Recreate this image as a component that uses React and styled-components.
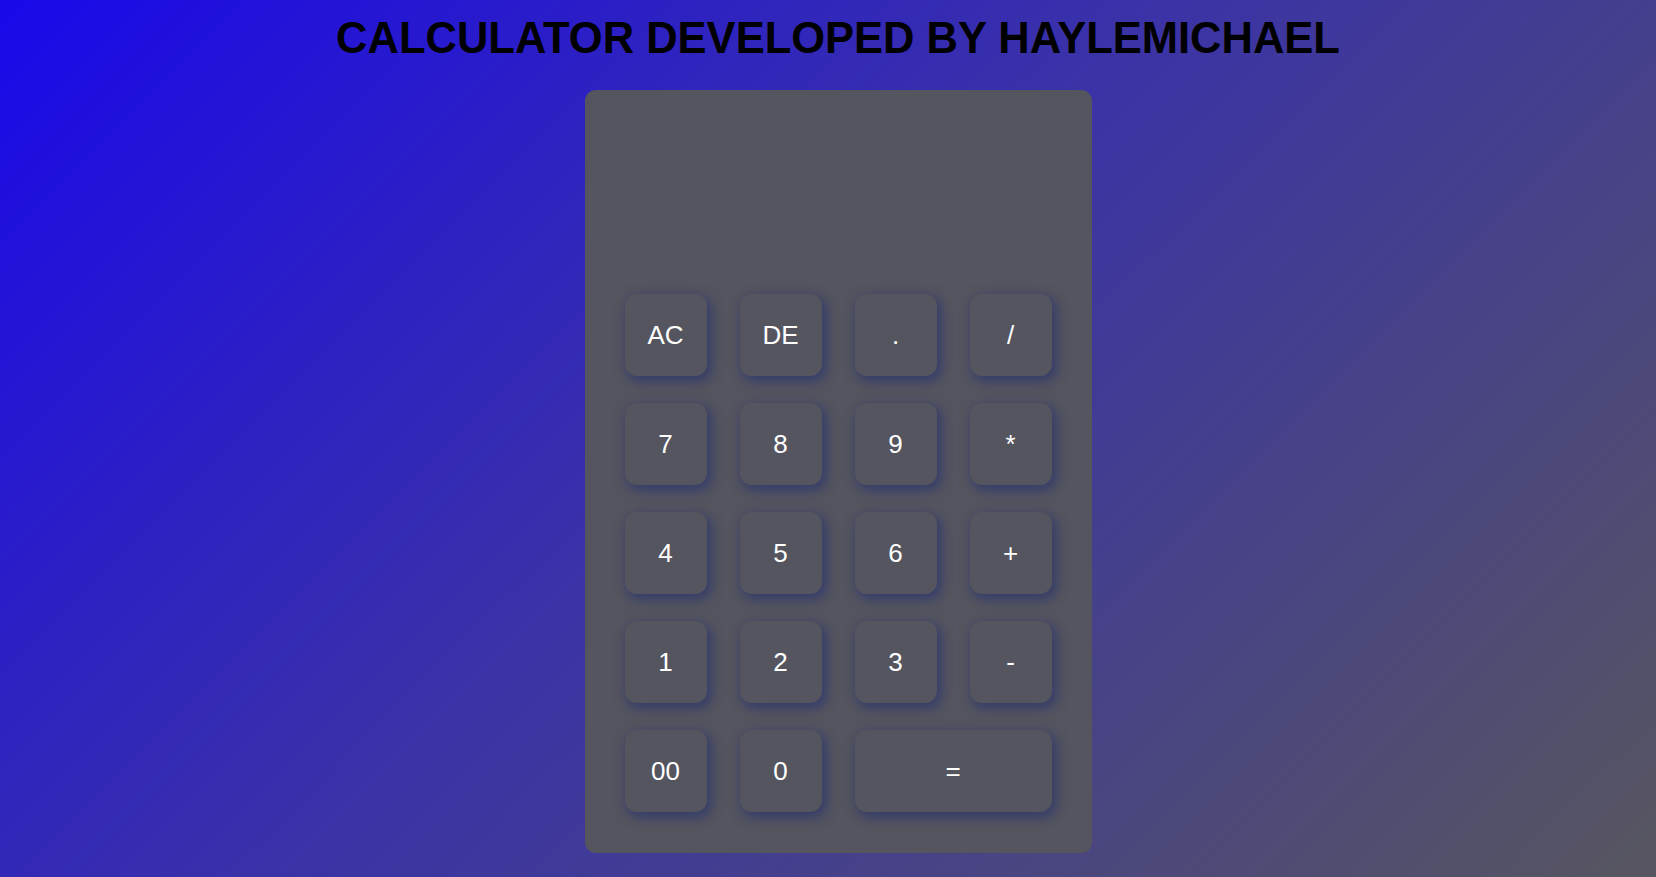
import React, { useState } from "react";
import styled, { createGlobalStyle } from "styled-components";

const Global = createGlobalStyle`
  html, body { margin: 0; padding: 0; }
  body {
    min-height: 877px;
    background: linear-gradient(135deg, #1a08ea 0%, #3a32a8 45%, #57565f 100%);
    font-family: "Liberation Sans", Arial, sans-serif;
  }
`;

const Page = styled.main`
  min-height: 877px;
  box-sizing: border-box;
  padding: 14px 0 0 20px;
  display: flex;
  flex-direction: column;
  align-items: center;
`;

const Title = styled.h1`
  margin: 0 0 27px;
  font-size: 43.5px;
  font-weight: 700;
  line-height: 49px;
  color: #000;
  font-family: "Liberation Sans", Arial, sans-serif;
`;

const Calculator = styled.div`
  width: 507px;
  box-sizing: border-box;
  padding: 40px 40px 41px;
  background: #55555f;
  border-radius: 11px;
`;

const Display = styled.div`
  height: 164px;
  color: #fff;
  font-size: 40px;
  text-align: right;
  overflow: hidden;
`;

const Keys = styled.div`
  display: grid;
  grid-template-columns: repeat(4, 82px);
  grid-auto-rows: 82px;
  column-gap: 33px;
  row-gap: 27px;
`;

const Key = styled.button`
  grid-column: span ${(p) => p.$span || 1};
  border: none;
  border-radius: 12px;
  background: #55555f;
  color: #fff;
  font-family: "Liberation Sans", Arial, sans-serif;
  font-size: 26px;
  cursor: pointer;
  box-shadow: 3px 4px 12px 2px rgba(48, 58, 108, 0.85);
  padding: 0;
`;

const keys = [
  ["AC"], ["DE"], ["."], ["/"],
  ["7"], ["8"], ["9"], ["*"],
  ["4"], ["5"], ["6"], ["+"],
  ["1"], ["2"], ["3"], ["-"],
  ["00"], ["0"], ["=", 2],
];

export default function App() {
  const [value, setValue] = useState("");
  const press = (k) => {
    if (k === "AC") setValue("");
    else if (k === "DE") setValue((v) => v.slice(0, -1));
    else if (k === "=") {
      try {
        // eslint-disable-next-line no-new-func
        setValue(String(Function(`return (${value})`)()));
      } catch {
        setValue("Error");
      }
    } else setValue((v) => v + k);
  };
  return (
    <>
      <Global />
      <Page>
        <Title>CALCULATOR DEVELOPED BY HAYLEMICHAEL</Title>
        <Calculator>
          <Display>{value}</Display>
          <Keys>
            {keys.map(([k, span]) => (
              <Key key={k} $span={span} onClick={() => press(k)}>
                {k}
              </Key>
            ))}
          </Keys>
        </Calculator>
      </Page>
    </>
  );
}
